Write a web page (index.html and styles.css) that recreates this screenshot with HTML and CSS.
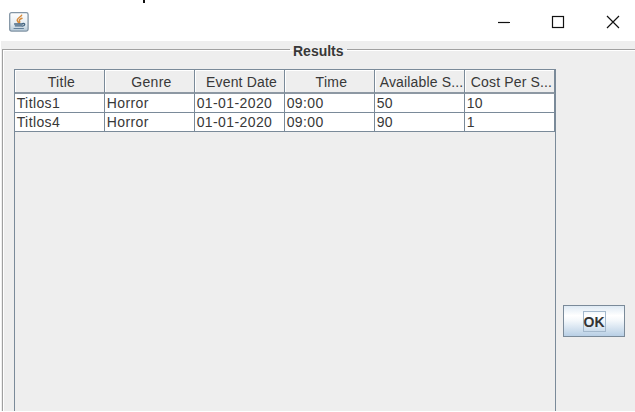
FILE: index.html
```
<!DOCTYPE html>
<html lang="en">
<head>
<meta charset="utf-8">
<title>Results</title>
<link rel="stylesheet" href="styles.css">
</head>
<body>
<div class="stray-mark"></div>
<header class="titlebar">
  <svg class="java" width="20" height="20" viewBox="0 0 20 20">
    <defs><linearGradient id="tile" x2="0" y2="1"><stop stop-color="#fff"/><stop offset=".6" stop-color="#e6edf2"/><stop offset="1" stop-color="#b4c8d7"/></linearGradient></defs>
    <rect x=".7" y=".7" width="18.4" height="18.4" rx="1.8" fill="url(#tile)" stroke="#8295a5" stroke-width="1.3"/>
    <g fill="none" stroke-linecap="round">
      <path d="M12.600 3.200C12 5 8 6 8.200 8.200c.1 1 1 1.500 1.300 2.600M13 6.200c-2 .8-3 1.700-2.500 2.700.4.700.5 1.200-.2 2" stroke="#d88b3a" stroke-width="1.500"/>
      <path d="M5.600 12h7.800M6.300 13.800h6.500M13.500 11.700c3-1 3 2.100-.2 2.500" stroke="#456581" stroke-width="1.300"/>
      <path d="M5 16.500h9.500" stroke="#64819a"/>
    </g>
  </svg>
  <svg class="controls" width="126" height="16" viewBox="0 0 126 16" fill="none" stroke="#111" stroke-width="1.200">
    <path d="M1 8.500h12"/>
    <rect x="55.500" y="2.500" width="11" height="11"/>
    <path d="M110 2l12 12M122 2l-12 12"/>
  </svg>
</header>
<main class="content">
  <fieldset class="results">
    <legend>Results</legend>
    <div class="layout">
      <div class="scroll">
        <table>
          <thead><tr><th>Title</th><th>Genre</th><th class="tight">Event Date</th><th>Time</th><th class="tight">Available S...</th><th class="tight">Cost Per S...</th></tr></thead>
          <tbody>
            <tr><td>Titlos1</td><td>Horror</td><td>01-01-2020</td><td>09:00</td><td>50</td><td>10</td></tr>
            <tr><td>Titlos4</td><td>Horror</td><td>01-01-2020</td><td>09:00</td><td>90</td><td>1</td></tr>
          </tbody>
        </table>
      </div>
      <button class="ok"><span>OK</span></button>
    </div>
  </fieldset>
</main>
</body>
</html>
```
FILE: styles.css
```
* { box-sizing: border-box; }
body {
  margin: 0;
  width: 635px;
  height: 412px;
  overflow: hidden;
  background: #fff;
  color: #383838;
  font: 14px/18px "Liberation Sans", Arial, sans-serif;
}
.stray-mark {
  position: absolute;
  left: 143px;
  top: 0;
  width: 2px;
  height: 3px;
  background: #111;
}
.titlebar {
  display: flex;
  justify-content: space-between;
  height: 41px;
  padding: 12px 12.500px 0 9px;
}
.controls { margin-top: 1.500px; }
.content {
  height: 370px;
  margin-left: 1px;
  overflow: hidden;
  background: #eee;
}
.results {
  width: 660px;
  height: 400px;
  min-width: 0;
  margin: 0 0 0 1px;
  padding: 0;
  border: 1px solid #a0a0a0;
  box-shadow: inset 1px 1px #fff;
}
legend {
  height: 17px;
  margin-left: 287px;
  padding: 0 3px;
  font-weight: bold;
  line-height: 21px;
}
.layout {
  display: flex;
  align-items: flex-start;
  gap: 7px;
  padding: 11px 0 0 11px;
}
.scroll {
  width: 542px;
  height: 360px;
  border: 1px solid #7a8a99;
}
table {
  width: 540px;
  table-layout: fixed;
  border-collapse: separate;
  border-spacing: 0;
}
th {
  height: 24px;
  padding: 3px 0 0 4px;
  border-right: 1px solid #7a8a99;
  border-bottom: 2px solid #8d98a3;
  box-shadow: inset 1px 1px #fff;
  font-weight: normal;
  letter-spacing: .3px;
  line-height: 17px;
  white-space: nowrap;
}
.tight { letter-spacing: .15px; }
td {
  height: 19px;
  padding: 0 0 0 1.700px;
  border-right: 1px solid #7a8a99;
  border-bottom: 1px solid #7a8a99;
  background: #fff;
  letter-spacing: .4px;
}
.ok {
  width: 62px;
  height: 32px;
  margin-top: 236px;
  padding: 0;
  border: 1px solid #7a8a99;
  background: linear-gradient(#dfeaf4, #fff 32%, #f4f8fb 48%, #b8cfe5);
  color: #333;
  font: bold 14px/20px "Liberation Sans", Arial, sans-serif;
}
.ok span {
  display: block;
  width: 23px;
  height: 21px;
  margin: 0 auto;
  border: 1px solid #a3b8cc;
}
```
